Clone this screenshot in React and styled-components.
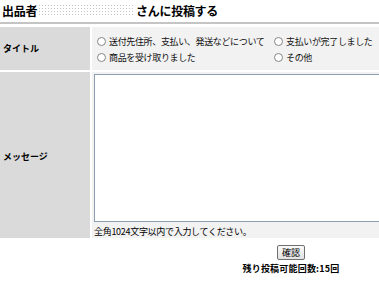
import React from "react";
import styled, { createGlobalStyle } from "styled-components";

const Global = createGlobalStyle`
  html, body { margin: 0; padding: 0; background: #fff; overflow: hidden; }
  body { font-family: "Noto Sans CJK JP", "DejaVu Sans", sans-serif; color: #000; }
`;

const Page = styled.div`
  width: 582px;
`;

const Header = styled.h1`
  margin: 0;
  padding-left: 2px;
  display: flex;
  align-items: center;
  font-size: 12px;
  font-weight: bold;
  letter-spacing: -0.3px;
  border-bottom: 2px solid #c4c4c4;
  box-sizing: border-box;
  height: 24px;
  padding-bottom: 2px;
`;

const Blur = styled.span`
  display: inline-block;
  width: 96px;
  height: 12px;
  margin: 0 2px 0 1px;
  background-image: radial-gradient(circle, #b8b8b8 0.6px, transparent 0.9px);
  background-size: 3px 3px;
  opacity: 0.8;
`;

const Grid = styled.div`
  margin-top: 3px;
  display: grid;
  grid-template-columns: 90px 1fr;
  grid-template-rows: 43px 166px;
  gap: 2px;
`;

const Label = styled.div`
  background: #dadada;
  display: flex;
  align-items: center;
  padding-left: 3px;
  font-size: 9px;
  font-weight: bold;
  padding-top: ${(p) => p.$pt || 0}px;
`;

const Cell = styled.div`
  background: #f2f2f2;
  padding: ${(p) => p.$pad};
`;

const Options = styled.div`
  display: grid;
  grid-template-columns: 177px auto;
  grid-auto-rows: 16px;
`;

const Option = styled.label`
  display: flex;
  align-items: center;
  gap: 3px;
  font-size: 9px;
  letter-spacing: -0.35px;
  color: #111;
  white-space: nowrap;
`;

const Radio = styled.span`
  width: 7px;
  height: 7px;
  border: 1px solid #858585;
  border-radius: 50%;
  background: #fff;
  flex: none;
`;

const TextArea = styled.textarea`
  display: block;
  width: 480px;
  height: 148px;
  box-sizing: border-box;
  border: 1px solid #8d9fb3;
  background: #fff;
  resize: none;
  margin: 0;
`;

const Hint = styled.div`
  font-size: 9px;
  letter-spacing: -0.3px;
  margin-top: 3px;
  white-space: nowrap;
`;

const Footer = styled.div`
  display: flex;
  flex-direction: column;
  align-items: center;
  padding-top: 7px;
`;

const Button = styled.button`
  font-family: inherit;
  font-size: 9px;
  height: 15px;
  padding: 0 4px;
  line-height: 13px;
  border: 1px solid #6f6f6f;
  border-radius: 2px;
  background: linear-gradient(#fafafa, #e2e2e2);
  color: #000;
`;

const Count = styled.div`
  margin-top: 2px;
  font-size: 9px;
  font-weight: bold;
  letter-spacing: 0.2px;
`;

const options = [
  "送付先住所、支払い、発送などについて",
  "支払いが完了しました",
  "商品を受け取りました",
  "その他",
];

export default function App() {
  return (
    <Page>
      <Global />
      <Header>
        出品者<Blur />さんに投稿する
      </Header>
      <Grid>
        <Label>タイトル</Label>
        <Cell $pad="6px 0 0 5px">
          <Options>
            {options.map((o) => (
              <Option key={o}>
                <Radio />
                {o}
              </Option>
            ))}
          </Options>
        </Cell>
        <Label $pt={2}>メッセージ</Label>
        <Cell $pad="2px 0 0 2px">
          <TextArea />
          <Hint>全角1024文字以内で入力してください。</Hint>
        </Cell>
      </Grid>
      <Footer>
        <Button>確認</Button>
        <Count>残り投稿可能回数:15回</Count>
      </Footer>
    </Page>
  );
}
